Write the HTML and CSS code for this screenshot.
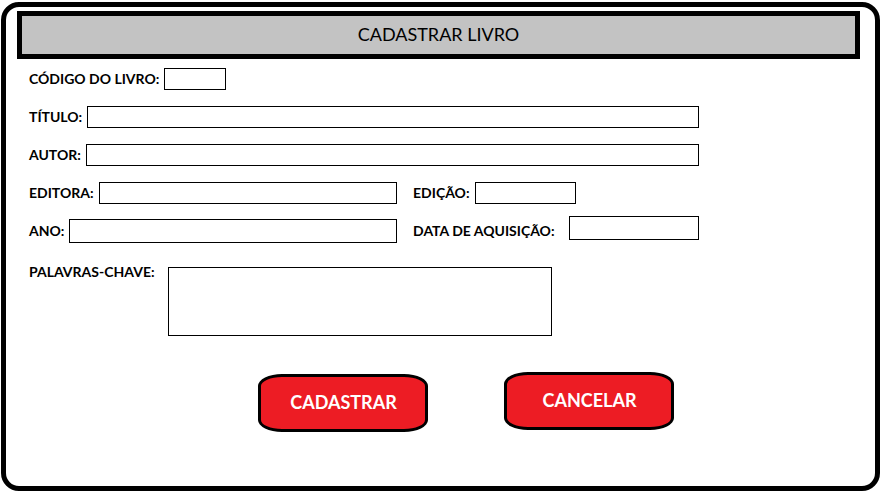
FILE: index.html
```html
<!DOCTYPE html>
<html lang="pt-BR">
<head>
<meta charset="utf-8">
<meta name="viewport" content="width=device-width, initial-scale=1">
<title>Cadastrar Livro</title>
<link rel="stylesheet" href="styles.css">
</head>
<body>
<main class="window">
  <h1 class="title">CADASTRAR LIVRO</h1>
  <form class="form">
    <div class="fields">
      <div class="field wide">
        <label for="codigo">CÓDIGO DO LIVRO:</label>
        <input id="codigo" class="code" type="text">
      </div>
      <div class="field wide">
        <label for="titulo">TÍTULO:</label>
        <input id="titulo" class="fill" type="text">
      </div>
      <div class="field wide">
        <label for="autor">AUTOR:</label>
        <input id="autor" class="fill" type="text">
      </div>
      <div class="field">
        <label for="editora">EDITORA:</label>
        <input id="editora" class="fill" type="text">
      </div>
      <div class="field">
        <label for="edicao">EDIÇÃO:</label>
        <input id="edicao" class="edition" type="text">
      </div>
      <div class="field">
        <label for="ano">ANO:</label>
        <input id="ano" class="fill tall" type="text">
      </div>
      <div class="field">
        <label for="data">DATA DE AQUISIÇÃO:</label>
        <input id="data" class="date tall" type="text">
      </div>
      <div class="field wide area">
        <label for="palavras">PALAVRAS-CHAVE:</label>
        <textarea id="palavras" class="keywords"></textarea>
      </div>
    </div>
    <div class="actions">
      <button class="button" type="submit">CADASTRAR</button>
      <button class="button cancel" type="button">CANCELAR</button>
    </div>
  </form>
</main>
</body>
</html>
```
FILE: styles.css
```css
* {
  box-sizing: border-box;
}

body {
  margin: 0;
  padding: 2px 2px 0 1px;
  background: #fff;
  color: #000;
  font-family: Lato, "Liberation Sans", sans-serif;
}

.window {
  min-height: calc(100vh - 2px);
  padding: 4px 15px 0 11px;
  border: 5px solid #000;
  border-radius: 18px;
}

.title {
  margin: 0;
  padding: 6px 0 8px;
  border: 5px solid #000;
  background: #c3c3c3;
  font-size: 18px;
  font-weight: 400;
  line-height: 24px;
  text-align: center;
}

.form {
  padding: 1px 0 0 12px;
}

.fields {
  display: grid;
  grid-template-columns: 368fr 286fr;
  grid-auto-rows: minmax(38px, auto);
  column-gap: 16px;
  width: calc(81% - 3px);
}

.field {
  display: flex;
  align-items: center;
  gap: 5px;
}

.wide {
  grid-column: 1 / -1;
}

label {
  font-size: 14px;
  font-weight: 700;
  line-height: 20px;
  white-space: nowrap;
}

input,
textarea {
  height: 22px;
  margin: 0;
  padding: 0 4px;
  border: 1px solid #000;
  border-radius: 0;
  background: #fff;
  font: inherit;
  font-size: 14px;
}

.fill {
  flex: 1;
  min-width: 0;
}

.tall {
  height: 24px;
}

.code {
  width: 62px;
}

.edition {
  width: 101px;
}

.date {
  width: 130px;
  margin: 0 0 6px auto;
}

.area {
  align-items: flex-start;
  padding-top: 12px;
}

.keywords {
  width: 384px;
  height: 69px;
  margin: 5px 0 0 8px;
  resize: none;
}

.actions {
  display: flex;
  justify-content: center;
  align-items: flex-start;
  gap: 76px;
  padding: 36px 0 0 42px;
}

.button {
  width: 170px;
  height: 58px;
  margin: 2px 0 0;
  padding: 0 0 2px 2px;
  border: 3px solid #000;
  border-radius: 24px / 12px;
  background: #ed1c24;
  color: #fff;
  font: inherit;
  font-size: 18px;
  font-weight: 700;
}

.cancel {
  margin-top: 0;
}
```
